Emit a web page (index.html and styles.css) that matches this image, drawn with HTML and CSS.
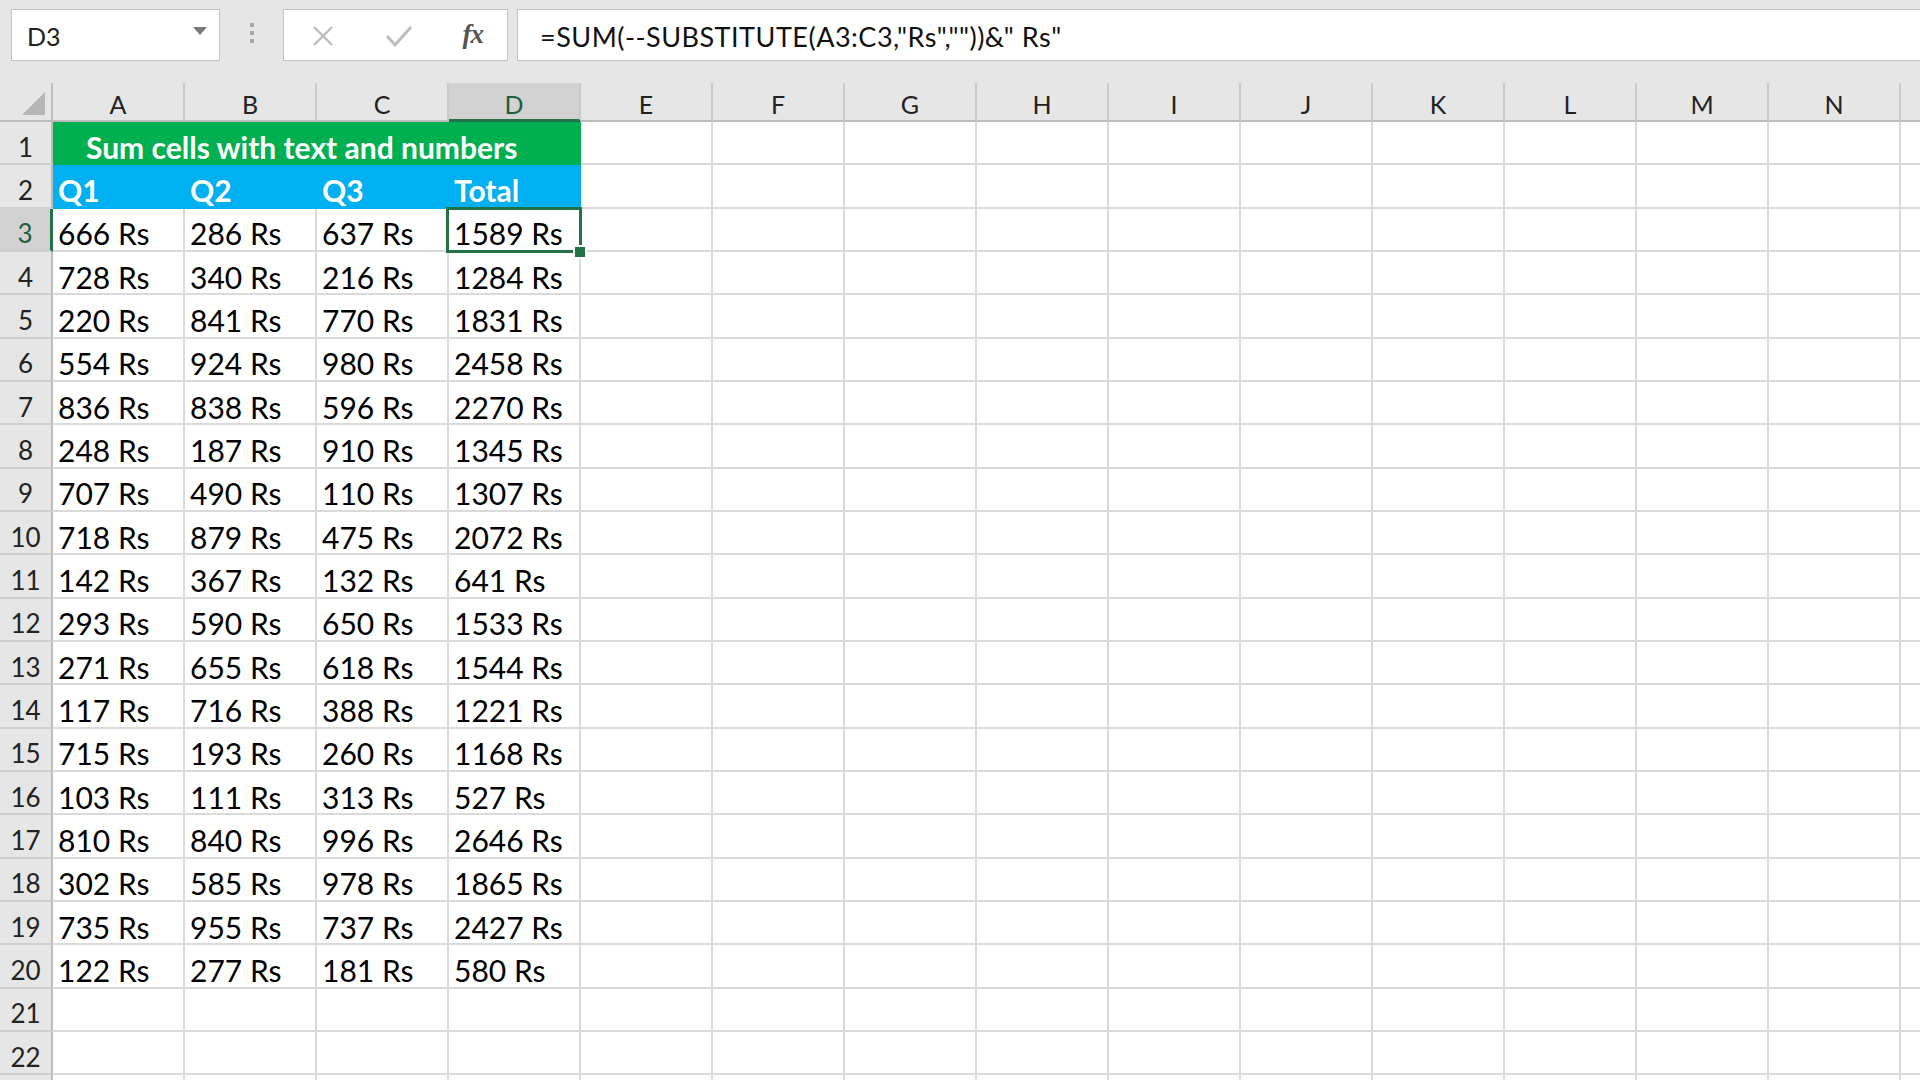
FILE: index.html
```html
<!DOCTYPE html>
<html lang="en">
<head>
<meta charset="utf-8">
<title>Sum cells with text and numbers</title>
<link rel="stylesheet" href="styles.css">
</head>
<body>
<div class="app">
  <div class="fbar">
    <div class="namebox">
      <span class="name">D3</span>
      <span class="caret"></span>
    </div>
    <div class="grip"><i></i><i></i><i></i></div>
    <div class="btns">
      <svg class="ico-x" width="24" height="20" viewBox="0 0 24 20"><path d="M3 1 L21 19 M21 1 L3 19" stroke="#bdbdbd" stroke-width="2.4" fill="none"/></svg>
      <svg class="ico-ok" width="28" height="22" viewBox="0 0 28 22"><path d="M2 11 L10 20 L26 2" stroke="#bdbdbd" stroke-width="3" fill="none"/></svg>
      <span class="fx">fx</span>
    </div>
    <div class="formula">=SUM(--SUBSTITUTE(A3:C3,"Rs",""))&amp;" Rs"</div>
  </div>

  <div class="sheet">
    <div class="corner"><span class="tri"></span></div>
    <div class="ch">A</div><div class="ch">B</div><div class="ch">C</div><div class="ch ch-sel">D</div>
    <div class="ch">E</div><div class="ch">F</div><div class="ch">G</div><div class="ch">H</div>
    <div class="ch">I</div><div class="ch">J</div><div class="ch">K</div><div class="ch">L</div>
    <div class="ch">M</div><div class="ch">N</div><div class="ch ch-end"></div>

    <div class="rh">1</div><div class="c title">Sum cells with text and numbers</div><div class="rest"></div>
    <div class="rh">2</div><div class="c hd">Q1</div><div class="c hd">Q2</div><div class="c hd">Q3</div><div class="c hd">Total</div><div class="rest"></div>
    <div class="rh rh-sel">3</div><div class="c">666 Rs</div><div class="c">286 Rs</div><div class="c">637 Rs</div><div class="c sel">1589 Rs</div><div class="rest"></div>
    <div class="rh">4</div><div class="c">728 Rs</div><div class="c">340 Rs</div><div class="c">216 Rs</div><div class="c">1284 Rs</div><div class="rest"></div>
    <div class="rh">5</div><div class="c">220 Rs</div><div class="c">841 Rs</div><div class="c">770 Rs</div><div class="c">1831 Rs</div><div class="rest"></div>
    <div class="rh">6</div><div class="c">554 Rs</div><div class="c">924 Rs</div><div class="c">980 Rs</div><div class="c">2458 Rs</div><div class="rest"></div>
    <div class="rh">7</div><div class="c">836 Rs</div><div class="c">838 Rs</div><div class="c">596 Rs</div><div class="c">2270 Rs</div><div class="rest"></div>
    <div class="rh">8</div><div class="c">248 Rs</div><div class="c">187 Rs</div><div class="c">910 Rs</div><div class="c">1345 Rs</div><div class="rest"></div>
    <div class="rh">9</div><div class="c">707 Rs</div><div class="c">490 Rs</div><div class="c">110 Rs</div><div class="c">1307 Rs</div><div class="rest"></div>
    <div class="rh">10</div><div class="c">718 Rs</div><div class="c">879 Rs</div><div class="c">475 Rs</div><div class="c">2072 Rs</div><div class="rest"></div>
    <div class="rh">11</div><div class="c">142 Rs</div><div class="c">367 Rs</div><div class="c">132 Rs</div><div class="c">641 Rs</div><div class="rest"></div>
    <div class="rh">12</div><div class="c">293 Rs</div><div class="c">590 Rs</div><div class="c">650 Rs</div><div class="c">1533 Rs</div><div class="rest"></div>
    <div class="rh">13</div><div class="c">271 Rs</div><div class="c">655 Rs</div><div class="c">618 Rs</div><div class="c">1544 Rs</div><div class="rest"></div>
    <div class="rh">14</div><div class="c">117 Rs</div><div class="c">716 Rs</div><div class="c">388 Rs</div><div class="c">1221 Rs</div><div class="rest"></div>
    <div class="rh">15</div><div class="c">715 Rs</div><div class="c">193 Rs</div><div class="c">260 Rs</div><div class="c">1168 Rs</div><div class="rest"></div>
    <div class="rh">16</div><div class="c">103 Rs</div><div class="c">111 Rs</div><div class="c">313 Rs</div><div class="c">527 Rs</div><div class="rest"></div>
    <div class="rh">17</div><div class="c">810 Rs</div><div class="c">840 Rs</div><div class="c">996 Rs</div><div class="c">2646 Rs</div><div class="rest"></div>
    <div class="rh">18</div><div class="c">302 Rs</div><div class="c">585 Rs</div><div class="c">978 Rs</div><div class="c">1865 Rs</div><div class="rest"></div>
    <div class="rh">19</div><div class="c">735 Rs</div><div class="c">955 Rs</div><div class="c">737 Rs</div><div class="c">2427 Rs</div><div class="rest"></div>
    <div class="rh">20</div><div class="c">122 Rs</div><div class="c">277 Rs</div><div class="c">181 Rs</div><div class="c">580 Rs</div><div class="rest"></div>
    <div class="rh">21</div><div class="c"></div><div class="c"></div><div class="c"></div><div class="c"></div><div class="rest"></div>
    <div class="rh">22</div><div class="c"></div><div class="c"></div><div class="c"></div><div class="c"></div><div class="rest"></div>
    <div class="rh rh-cut"></div><div class="c"></div><div class="c"></div><div class="c"></div><div class="c"></div><div class="rest"></div>
  </div>
</div>
</body>
</html>
```

FILE: styles.css
```css
* { box-sizing: border-box; }
html, body { margin: 0; padding: 0; }
body {
  width: 1920px;
  height: 1080px;
  overflow: hidden;
  background: #e6e6e6;
  font-family: Lato, "Open Sans", "Liberation Sans", sans-serif;
  color: #000;
}
.app { display: flex; flex-direction: column; height: 1080px; }

/* formula bar */
.fbar {
  display: flex;
  align-items: stretch;
  height: 83px;
  padding: 9px 0 22px 11px;
  flex: none;
}
.namebox {
  width: 209px;
  background: #fff;
  border: 1.5px solid #c3c3c3;
  display: flex;
  align-items: center;
  justify-content: space-between;
  padding: 0 12px 0 15px;
}
.name { font-size: 25px; color: #222; padding-top: 1px; }
.caret {
  width: 0; height: 0;
  border-left: 7.5px solid transparent;
  border-right: 7.5px solid transparent;
  border-top: 8px solid #7a7a7a;
  margin-top: -8px;
}
.grip {
  width: 63px;
  display: flex;
  flex-direction: column;
  align-items: center;
  justify-content: center;
  gap: 4px;
  padding-bottom: 4px;
}
.grip i { display: block; width: 4px; height: 4px; background: #a8a8a8; }
.btns {
  width: 225px;
  background: #fff;
  border: 1.5px solid #c3c3c3;
  display: flex;
  align-items: center;
  padding: 0 24px 0 27px;
  justify-content: space-between;
}
.ico-x { margin-top: 2px; }
.ico-ok { margin-top: 2px; }
.fx {
  font-family: "Liberation Serif", "DejaVu Serif", serif;
  font-style: italic;
  font-weight: bold;
  font-size: 27px;
  color: #555;
  letter-spacing: -1px;
  margin-bottom: 2px;
}
.formula {
  flex: 1;
  margin-left: 9px;
  margin-right: -2px;
  background: #fff;
  border: 1.5px solid #c3c3c3;
  display: flex;
  align-items: center;
  padding: 2px 0 0 22px;
  font-size: 27px;
  letter-spacing: 0.5px;
  color: #111;
  white-space: nowrap;
}

/* sheet */
.sheet {
  flex: 1;
  display: grid;
  grid-template-columns: 53px repeat(14, 132px) 1fr;
  grid-template-rows: 39px;
  grid-auto-rows: 43.333px;
  background: #fff;
  overflow: hidden;
}
.corner {
  background: #e6e6e6;
  border-right: 2px solid #bdbdbd;
  border-bottom: 2px solid #bdbdbd;
  position: relative;
}
.tri {
  position: absolute;
  left: 22px; top: 9px;
  width: 0; height: 0;
  border-left: 23px solid transparent;
  border-bottom: 23px solid #b6b6b6;
}
.ch {
  background: #e6e6e6;
  border-right: 2px solid #cacaca;
  border-bottom: 2px solid #bdbdbd;
  display: flex;
  align-items: center;
  justify-content: center;
  font-size: 25px;
  color: #222;
  padding-top: 5px;
}
.ch-end { border-right: none; }
.ch-sel {
  background: #d2d2d2;
  border-bottom: 3px solid #217346;
  color: #1f5f3c;
}
.rh {
  grid-column: 1;
  background: #e6e6e6;
  border-right: 2px solid #bdbdbd;
  border-bottom: 2px solid #cfcfcf;
  display: flex;
  align-items: center;
  justify-content: center;
  font-size: 26px;
  color: #222;
  padding-top: 8px;
}
.rh-sel {
  background: #d2d2d2;
  border-right: 3px solid #217346;
  color: #1f5f3c;
}
.c {
  border-right: 2px solid #dadada;
  border-bottom: 2px solid #dadada;
  display: flex;
  align-items: center;
  padding: 8px 0 0 5px;
  font-size: 30px;
  white-space: nowrap;
  color: #000;
}
.rest {
  grid-column: 6 / -1;
  border-bottom: 2px solid #dadada;
  background-image: repeating-linear-gradient(to right, transparent 0 130px, #dadada 130px 132px);
}
.title {
  grid-column: 2 / span 4;
  background: #00b050;
  border-color: transparent;
  color: #fff;
  font-weight: bold;
  padding-left: 33px;
}
.hd {
  background: #00b0f0;
  border-color: transparent;
  color: #fff;
  font-weight: bold;
}
.sel { position: relative; z-index: 2; }
.sel::after {
  content: "";
  position: absolute;
  left: -3px; top: -2px; right: -3px; bottom: -3px;
  border: 3px solid #217346;
}
.sel::before {
  content: "";
  position: absolute;
  right: -6px; bottom: -7px;
  width: 10px; height: 10px;
  background: #217346;
  box-shadow: 0 0 0 2px #fff;
  z-index: 3;
}
```
